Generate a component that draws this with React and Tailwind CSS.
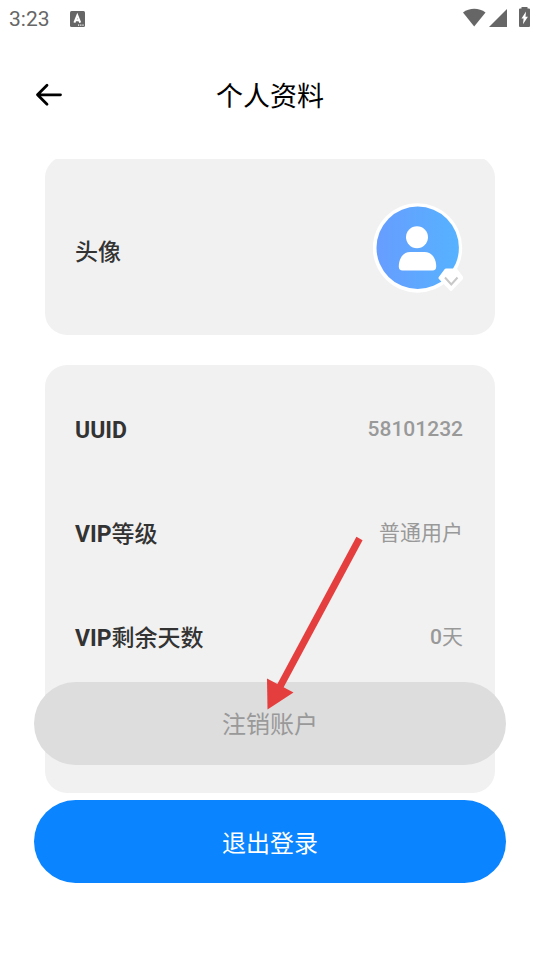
const rows = [
  { prefix: 'UUID', label: '', value: '58101232' },
  { prefix: 'VIP', label: '等级', value: '普通用户' },
  { prefix: 'VIP', label: '剩余天数', number: '0', value: '天' },
];

function StatusBar() {
  return (
    <div className="flex h-9 items-center justify-between pl-[9px] pr-[10px] text-[#666666]">
      <div className="flex items-center gap-5 pt-0.5">
        <time className="text-[21px] leading-6">3:23</time>
        <svg className="h-4 w-[15px]" viewBox="0 0 15 16" aria-hidden="true">
          <rect width="15" height="16" rx="1.5" fill="currentColor" />
          <path d="M4.400 11.600 7.300 4.400l2.900 7.200M5.400 9.200h3.800" fill="none" stroke="#fff" strokeWidth="2" />
          <path d="M8 14.200h1.200M10.200 14.200h1.200M12.400 14.200h1.200" stroke="#fff" strokeWidth="1.2" />
        </svg>
      </div>
      <div className="flex items-center pb-0.5">
        <svg className="h-[19px] w-[23px]" viewBox="0 0 23 19" aria-hidden="true">
          <path d="M0 4.500C6.500-.5 16-.5 22.500 4.500L11.200 18.500Z" fill="currentColor" />
        </svg>
        <svg className="ml-[3px] h-[19px] w-[18px]" viewBox="0 0 18 19" aria-hidden="true">
          <path d="M18 1v18H0Z" fill="currentColor" />
        </svg>
        <svg className="ml-3 h-5 w-[11px]" viewBox="0 0 11 20" aria-hidden="true">
          <path d="M2.500 0h6v1.600H10a1 1 0 0 1 1 1v16.400a1 1 0 0 1-1 1H1a1 1 0 0 1-1-1V2.600a1 1 0 0 1 1-1h1.500Z" fill="currentColor" />
          <path d="M7 4.600 2.500 11.400h2.100L4 17.200 8.900 9.800H6.500Z" fill="#fff" />
        </svg>
      </div>
    </div>
  );
}

function Avatar() {
  return (
    <svg className="h-[90px] w-[90px]" viewBox="0 0 90 90" aria-hidden="true">
      <defs>
        <linearGradient id="avatar-fill" x1="0" y1="0" x2="1" y2="0">
          <stop offset="0" stopColor="#679dff" />
          <stop offset="1" stopColor="#56b2ff" />
        </linearGradient>
      </defs>
      <circle cx="44.5" cy="45" r="44.7" fill="#fff" />
      <circle cx="44.7" cy="44.8" r="41.2" fill="url(#avatar-fill)" />
      <circle cx="44" cy="34.3" r="11" fill="#fff" />
      <path d="M37 49h14.500c7.500 0 11.700 7 11.700 14.500 0 2.500-1.200 4-3.700 4h-30c-2.500 0-3.700-1.500-3.700-4C25.800 56 30 49 37 49Z" fill="#fff" />
      <path d="M73 67h10l6 8-11 11.500L67 75Z" fill="#fff" stroke="#fff" strokeWidth="3" strokeLinejoin="round" />
      <path d="m72 74.500 6.300 7 6.200-7" fill="none" stroke="#c8c8c8" strokeWidth="2" />
    </svg>
  );
}

export default function App() {
  return (
    <div className="relative min-h-screen bg-white font-['Roboto','Noto_Sans_CJK_SC',sans-serif]" lang="zh-CN">
      <StatusBar />
      <header className="grid h-[117px] grid-cols-[1fr_auto_1fr] items-center px-[35px]">
        <button type="button" aria-label="返回" className="w-7">
          <svg className="h-7 w-7" viewBox="0 0 28 28" fill="none" stroke="#000" strokeWidth="2.8" strokeLinecap="round" strokeLinejoin="round">
            <path d="M25.500 13.800H2.500M12 4.300 2.500 13.800 12 23.300" />
          </svg>
        </button>
        <h1 className="pt-1 text-[27px] leading-9 text-black">个人资料</h1>
      </header>
      <main className="mt-1.5 overflow-hidden px-[45px]">
        <section className="-mt-[3px] flex h-[179px] items-center justify-between rounded-[22px] bg-[#f1f1f1] pl-[30px] pr-8 pt-1">
          <span className="pt-2.5 text-[23px] font-medium leading-8 text-[#333333]">头像</span>
          <Avatar />
        </section>
        <dl className="mt-[30px] rounded-[22px] bg-[#f1f1f1] pb-[104px] pl-[30px] pr-8 pt-3">
          {rows.map((row) => (
            <div key={row.prefix + row.label} className="flex h-[104px] items-center justify-between">
              <dt className="pt-[3px] text-[23px] font-medium leading-8 text-[#333333]">
                <b className="font-bold">{row.prefix}</b>
                {row.label}
              </dt>
              <dd className="text-[21px] font-normal leading-8 text-[#999999]">
                {row.number ? <span className="font-medium">{row.number}</span> : null}
                <span className={row.prefix === 'UUID' ? 'font-medium' : ''}>{row.value}</span>
              </dd>
            </div>
          ))}
        </dl>
      </main>
      <div className="relative -mt-[111px] flex flex-col gap-[35px] px-[34px] pb-[77px]">
        <button type="button" className="h-[83px] rounded-full bg-[#dddddd] pt-0.5 text-2xl text-[#999999]">注销账户</button>
        <button type="button" className="h-[83px] rounded-full bg-[#0a84ff] pt-1 text-2xl text-white">退出登录</button>
      </div>
      <svg className="pointer-events-none absolute left-1/2 top-[536px] -ml-[6px] h-[176px] w-[100px]" viewBox="264 536 100 176" aria-hidden="true">
        <path d="m359.500 538.500-80 149" stroke="#e53e3e" strokeWidth="7" />
        <path d="M267 678.500 293.500 692.500 267.500 709.500Z" fill="#e53e3e" />
      </svg>
    </div>
  );
}
